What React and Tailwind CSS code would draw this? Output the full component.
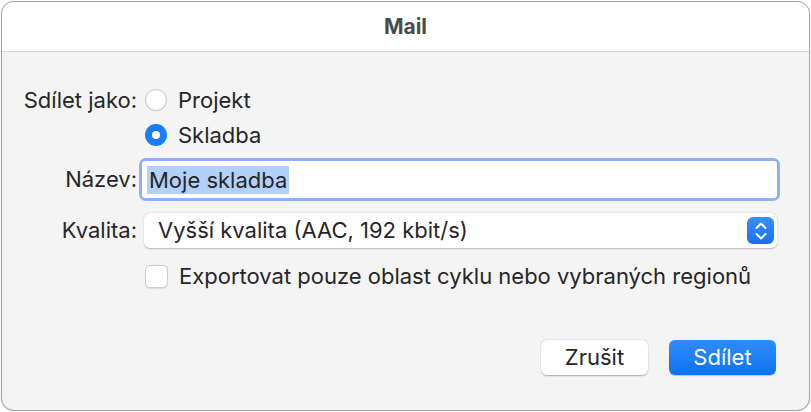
export default function App() {
    const font = { fontFamily: 'Inter, "Noto Sans", sans-serif' };

    return (
        <div className="w-[811px] h-[412px] bg-white p-[1px]" style={font}>
            <div className="w-full h-full rounded-[13px] border border-[#a3a3a3] overflow-hidden flex flex-col bg-[#f4f4f4] shadow-[0_0_1px_rgba(0,0,0,0.3)]">
                <div className="h-[50px] bg-white border-b border-[#d9d9d9] flex items-center justify-center shrink-0">
                    <span className="text-[21px] font-bold text-[#4b4b4b]">Mail</span>
                </div>

                <div className="flex flex-col pt-[30px] text-[22px] text-[#262626]">
                    <div className="flex h-[36px] items-center">
                        <div className="w-[135px] text-right whitespace-nowrap">Sdílet jako:</div>
                        <div className="ml-[8px] flex items-center gap-[11px]">
                            <span className="w-[22px] h-[22px] rounded-full bg-white border border-[#c9c9c9] shadow-[0_0.5px_1px_rgba(0,0,0,0.1)]" />
                            <span>Projekt</span>
                        </div>
                    </div>
                    <div className="flex h-[34px] items-center">
                        <div className="w-[135px]" />
                        <div className="ml-[8px] flex items-center gap-[11px]">
                            <span className="w-[22px] h-[22px] rounded-full bg-[#1b7ef8] flex items-center justify-center">
                                <span className="w-[8px] h-[8px] rounded-full bg-white" />
                            </span>
                            <span>Skladba</span>
                        </div>
                    </div>

                    <div className="flex h-[43px] items-center mt-[6px]">
                        <div className="w-[135px] text-right">Název:</div>
                        <div className="ml-[2px] w-[641px] h-[43px] rounded-[7px] bg-[#8cb1f6] p-[3px]">
                            <div className="w-full h-full bg-white rounded-[3px] flex items-center pl-[5px]">
                                <span className="bg-[#b2d1f8] px-[2px] leading-[28px]">Moje skladba</span>
                            </div>
                        </div>
                    </div>

                    <div className="flex h-[35px] items-center mt-[12px]">
                        <div className="w-[135px] text-right">Kvalita:</div>
                        <div className="ml-[7px] w-[633px] h-[35px] rounded-[6px] bg-white shadow-[0_0.5px_1.5px_rgba(0,0,0,0.25)] flex items-center pl-[14px] pr-[3px]">
                            <span className="flex-1">Vyšší kvalita (AAC, 192 kbit/s)</span>
                            <span className="w-[27px] h-[27px] rounded-[6px] bg-gradient-to-b from-[#3a8ff9] to-[#1471f0] flex items-center justify-center">
                                <svg width="14" height="18" viewBox="0 0 14 18" fill="none" stroke="white" strokeWidth="2" strokeLinecap="round" strokeLinejoin="round">
                                    <path d="M2.5 6 L7 1.5 L11.5 6" />
                                    <path d="M2.5 12 L7 16.5 L11.5 12" />
                                </svg>
                            </span>
                        </div>
                    </div>

                    <div className="flex h-[24px] items-center mt-[16px]">
                        <div className="w-[135px]" />
                        <div className="ml-[8px] flex items-center gap-[11px]">
                            <span className="w-[23px] h-[23px] rounded-[5px] bg-white border border-[#cdcdcd] shadow-[0_0.5px_1px_rgba(0,0,0,0.1)]" />
                            <span>Exportovat pouze oblast cyklu nebo vybraných regionů</span>
                        </div>
                    </div>

                    <div className="flex justify-end gap-[21px] mt-[52px] pr-[33px]">
                        <button className="w-[107px] h-[35px] rounded-[6px] bg-white shadow-[0_0.5px_1.5px_rgba(0,0,0,0.3)] text-[#262626]">Zrušit</button>
                        <button className="w-[107px] h-[35px] rounded-[6px] bg-gradient-to-b from-[#2f8cfb] to-[#0d72f0] text-white shadow-[0_0.5px_1px_rgba(0,0,0,0.2)]">Sdílet</button>
                    </div>
                </div>
            </div>
        </div>
    );
}
